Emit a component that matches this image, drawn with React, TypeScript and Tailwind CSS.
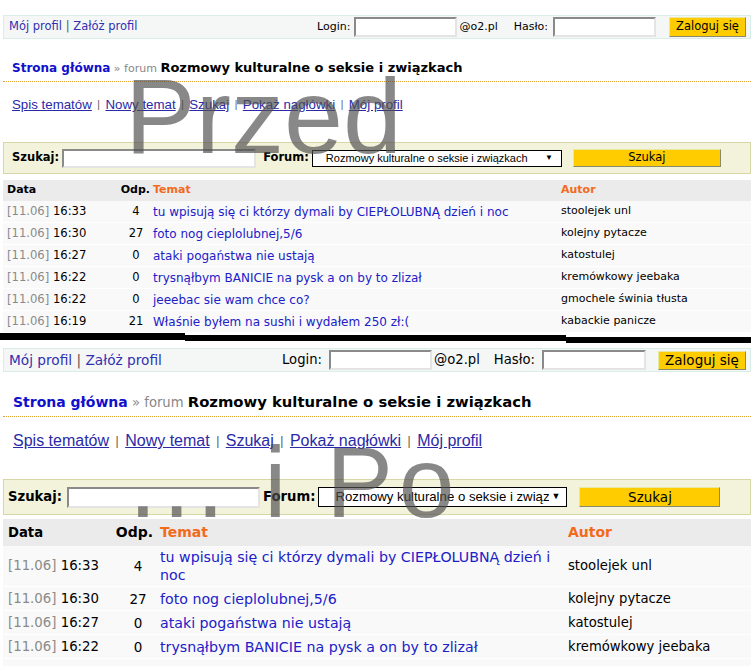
import React from "react";

const dv = "font-['DejaVu_Sans',sans-serif]";
const ar = "font-['Liberation_Sans',Arial,sans-serif]";

type Row = { d: string; t: string; n: string; topic: string; a: string };
const rows: Row[] = [
  { d: "[11.06]", t: "16:33", n: "4", topic: "tu wpisują się ci którzy dymali by CIEPŁOLUBNĄ dzień i noc", a: "stoolejek unl" },
  { d: "[11.06]", t: "16:30", n: "27", topic: "foto nog cieplolubnej,5/6", a: "kolejny pytacze" },
  { d: "[11.06]", t: "16:27", n: "0", topic: "ataki pogaństwa nie ustają", a: "katostulej" },
  { d: "[11.06]", t: "16:22", n: "0", topic: "trysnąłbym BANICIE na pysk a on by to zlizał", a: "kremówkowy jeebaka" },
  { d: "[11.06]", t: "16:22", n: "0", topic: "jeeebac sie wam chce co?", a: "gmochele świnia tłusta" },
  { d: "[11.06]", t: "16:19", n: "21", topic: "Właśnie byłem na sushi i wydałem 250 zł:(", a: "kabackie panicze" },
];

const links = ["Spis tematów", "Nowy temat", "Szukaj", "Pokaż nagłówki", "Mój profil"];

const inset = "bg-white border-2 border-t-[#8a8a8a] border-l-[#8a8a8a] border-b-[#e4e4e4] border-r-[#e4e4e4]";
const yellowBtn = "bg-[#ffcc00] border border-t-[#e8e8a0] border-l-[#e8e8a0] border-b-[#8a8a6a] border-r-[#8a8a6a] text-black flex items-center justify-center";

function Top() {
  return (
    <div className={`${dv} pt-[15px]`}>
      <div className="ml-[3px] h-[24px] bg-[#f5f7f7] border border-[#d9eee8] flex items-center justify-between pl-[5px] pr-[4px] text-[11px]">
        <div className="text-[#3030b0] text-[11.5px]">
          Mój profil <span className="text-[#555]">|</span> Załóż profil
        </div>
        <div className="flex items-center text-black">
          <span>Login:</span>
          <div className={`${inset} ml-[4px] w-[103px] h-[20px]`} />
          <span className="ml-[2px]">@o2.pl</span>
          <span className="ml-[16px]">Hasło:</span>
          <div className={`${inset} ml-[5px] w-[103px] h-[20px]`} />
          <div className={`${yellowBtn} ml-[13px] w-[77px] h-[20px] text-[11.5px]`}>Zaloguj się</div>
        </div>
      </div>
      <div className="ml-[3px] mt-[20px] pb-[4px] pl-[9px] border-b border-dotted border-[#e0a030] leading-[16px] font-bold whitespace-nowrap">
        <span className="text-[#1010cc] text-[12px]">Strona główna</span>
        <span className="text-[#888] font-normal text-[11px]"> » forum </span>
        <span className="text-black text-[13px]">Rozmowy kulturalne o seksie i związkach</span>
      </div>
      <div className={`${ar} mt-[15px] pl-[12px] text-[13.3px] leading-[16px] text-[#2a2aa8] flex items-center whitespace-nowrap`}>
        {links.map((l, i) => (
          <React.Fragment key={l}>
            {i > 0 && <span className="text-[#555] text-[10px] mx-[5.5px]">|</span>}
            <span className="underline">{l}</span>
          </React.Fragment>
        ))}
      </div>
      <div className="ml-[3px] mt-[29px] h-[32px] bg-[#f3f3dc] border border-[#d6d6a6] flex items-center pl-[8px] text-[11px] font-bold">
        <span className="text-[11.5px]">Szukaj:</span>
        <div className={`${inset} ml-[3px] w-[194px] h-[19px]`} />
        <span className="ml-[7px] text-[11.5px]">Forum:</span>
        <div className={`${ar} ml-[3px] w-[250px] h-[17px] bg-white border border-black flex items-center pl-[13px] pr-[8px] font-normal text-[11px] justify-between`}>
          <span className="whitespace-nowrap overflow-hidden">Rozmowy kulturalne o seksie i związkach</span>
          <span className="text-[8px]">▼</span>
        </div>
        <div className={`${yellowBtn} ml-[11px] w-[148px] h-[18px] font-normal text-[11.5px]`}>Szukaj</div>
      </div>
      <div className="ml-[3px] mt-[6px] h-[21px] bg-[#ebebeb] flex items-center text-[11px] font-bold">
        <div className="w-[105px] pl-[4px]">Data</div>
        <div className="w-[44px] text-right pr-[2px]">Odp.</div>
        <div className="w-[407px] pl-[1px] text-[#f26a1b]">Temat</div>
        <div className="flex-1 pl-[2px] text-[#f26a1b]">Autor</div>
      </div>
      {rows.map((r, i) => (
        <div key={i} className="ml-[3px] h-[22px] bg-[#f9f9f9] border-b border-white flex items-center">
          <div className="w-[105px] pl-[4px] whitespace-nowrap text-[11.6px]">
            <span className="text-[#8a8a8a]">{r.d}</span> <span className="text-black">{r.t}</span>
          </div>
          <div className="w-[44px] pl-[12px] text-center text-black text-[11.5px]">{r.n}</div>
          <div className="w-[407px] pl-[1px] text-[#2020c8] whitespace-nowrap text-[12px]">{r.topic}</div>
          <div className="flex-1 pl-[2px] text-black text-[11px] whitespace-nowrap">{r.a}</div>
        </div>
      ))}
    </div>
  );
}

function Bottom() {
  return (
    <div className={`${dv} pt-[5px]`}>
      <div className="ml-[3px] h-[24px] bg-[#f5f7f7] border border-[#d9eee8] flex items-center justify-between pl-[5px] pr-[4px] text-[13.2px]">
        <div className="text-[#3030b0] text-[13.7px]">
          Mój profil <span className="text-[#555]">|</span> Załóż profil
        </div>
        <div className="flex items-center text-black">
          <span>Login:</span>
          <div className={`${inset} ml-[7px] w-[103px] h-[20px]`} />
          <span className="ml-[2px]">@o2.pl</span>
          <span className="ml-[14px]">Hasło:</span>
          <div className={`${inset} ml-[7px] w-[104px] h-[20px]`} />
          <div className={`${yellowBtn} ml-[12px] w-[88px] h-[19px] text-[13.5px]`}>Zaloguj się</div>
        </div>
      </div>
      <div className="ml-[3px] mt-[21px] pb-[4px] pl-[10px] border-b border-dotted border-[#e0a030] leading-[18px] font-bold whitespace-nowrap">
        <span className="text-[#1010cc] text-[14px]">Strona główna</span>
        <span className="text-[#888] font-normal text-[13.2px]"> » forum </span>
        <span className="text-black text-[14.8px]">Rozmowy kulturalne o seksie i związkach</span>
      </div>
      <div className={`${ar} mt-[15px] pl-[13px] text-[16px] leading-[18px] text-[#2a2aa8] flex items-center whitespace-nowrap`}>
        {links.map((l, i) => (
          <React.Fragment key={l}>
            {i > 0 && <span className="text-[#555] text-[12px] mx-[6.5px]">|</span>}
            <span className="underline">{l}</span>
          </React.Fragment>
        ))}
      </div>
      <div className="ml-[3px] mt-[29px] h-[36px] bg-[#f3f3dc] border border-[#d6d6a6] flex items-center pl-[4px] text-[13.2px] font-bold">
        <span>Szukaj:</span>
        <div className={`${inset} ml-[5px] w-[193px] h-[21px]`} />
        <span className="ml-[3px]">Forum:</span>
        <div className={`${ar} ml-[3px] w-[249px] h-[20px] bg-white border border-black flex items-center pl-[16px] pr-[6px] font-normal text-[13.2px]`}>
          <span className="whitespace-nowrap overflow-hidden flex-1">Rozmowy kulturalne o seksie i związkach</span>
          <span className="text-[9px] ml-[3px]">▼</span>
        </div>
        <div className={`${yellowBtn} ml-[12px] w-[141px] h-[20px] font-normal text-[13.5px]`}>Szukaj</div>
      </div>
      <div className="ml-[3px] mt-[4px] h-[27px] bg-[#ebebeb] flex items-center text-[13.2px] font-bold">
        <div className="w-[105px] pl-[5px]">Data</div>
        <div className="w-[48px] text-right pr-[3px] text-[14px]">Odp.</div>
        <div className="w-[407px] pl-[4px] text-[#f26a1b] text-[14px]">Temat</div>
        <div className="flex-1 pl-[5px] text-[#f26a1b] text-[14px]">Autor</div>
      </div>
      {rows.slice(0, 4).map((r, i) => (
        <div key={i} className="ml-[3px] min-h-[24px] py-[2px] bg-[#f9f9f9] border-b border-white flex items-center leading-[18px]">
          <div className="w-[105px] pl-[5px] whitespace-nowrap text-[13.3px]">
            <span className="text-[#8a8a8a]">{r.d}</span> <span className="text-black">{r.t}</span>
          </div>
          <div className="w-[48px] pl-[12px] text-center text-black text-[13.5px]">{r.n}</div>
          <div className="w-[407px] pl-[4px] pr-[10px] text-[#2020c8] text-[14.2px]">{r.topic}</div>
          <div className="flex-1 pl-[5px] text-black whitespace-nowrap text-[13.2px]">{r.a}</div>
        </div>
      ))}
      <div className="ml-[3px] h-[24px] bg-[#f9f9f9]" />
    </div>
  );
}

export default function App() {
  return (
    <div className="relative w-[751px] h-[666px] overflow-hidden bg-white">
      <Top />
      <svg className="block" width="751" height="10" viewBox="0 0 751 10">
        <polygon points="0,0 185,0 185,2 566,2 566,4 751,4 751,10 566,10 566,8 185,8 185,7 0,7" fill="#000" />
      </svg>
      <Bottom />
      <div className={`${ar} pointer-events-none absolute left-[125px] top-[63px] text-[106px] leading-none text-[rgba(80,80,80,0.68)] whitespace-nowrap`}>
        Przed
      </div>
      <div className={`${ar} pointer-events-none absolute left-[129px] top-[432px] text-[100px] leading-none tracking-[6px] text-[rgba(80,80,80,0.68)] whitespace-pre`}>
        ... i Po
      </div>
    </div>
  );
}
